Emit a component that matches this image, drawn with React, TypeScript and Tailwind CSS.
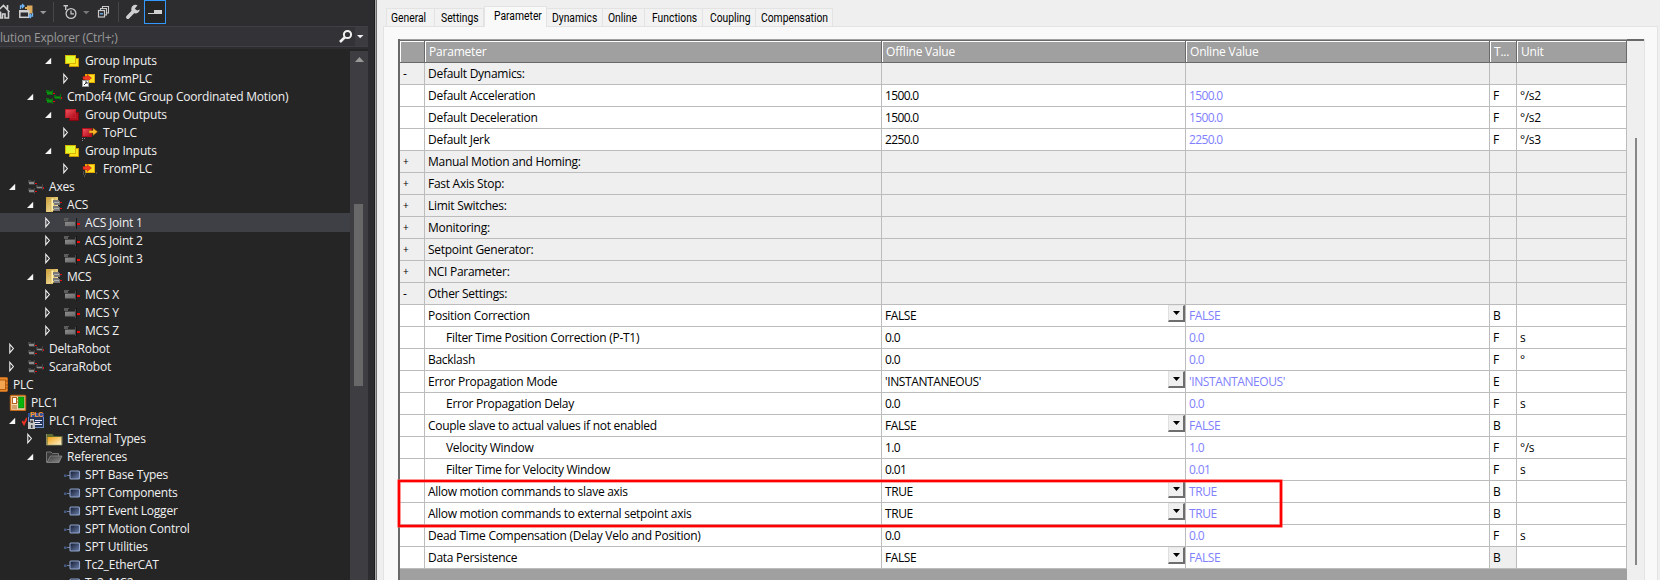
import React from 'react';

type IconName =
  | 'inputs' | 'outputs' | 'fromLinked' | 'from' | 'to' | 'group' | 'axes' | 'axisFolder' | 'axis'
  | 'plc' | 'plcInstance' | 'project' | 'folder' | 'openFolder' | 'library';

type Toggle = 'open' | 'closed' | 'openChecked' | 'none';

interface Node {
  pad: string;
  toggle: Toggle;
  icon: IconName;
  label: string;
  selected?: boolean;
}

const L0 = 'pl-[9px]';
const L1 = 'pl-[27px]';
const L2 = 'pl-[45px]';
const L3 = 'pl-[63px]';

const NODES: Node[] = [
  { pad: L2, toggle: 'open', icon: 'inputs', label: 'Group Inputs' },
  { pad: L3, toggle: 'closed', icon: 'fromLinked', label: 'FromPLC' },
  { pad: L1, toggle: 'open', icon: 'group', label: 'CmDof4 (MC Group Coordinated Motion)' },
  { pad: L2, toggle: 'open', icon: 'outputs', label: 'Group Outputs' },
  { pad: L3, toggle: 'closed', icon: 'to', label: 'ToPLC' },
  { pad: L2, toggle: 'open', icon: 'inputs', label: 'Group Inputs' },
  { pad: L3, toggle: 'closed', icon: 'from', label: 'FromPLC' },
  { pad: L0, toggle: 'open', icon: 'axes', label: 'Axes' },
  { pad: L1, toggle: 'open', icon: 'axisFolder', label: 'ACS' },
  { pad: L2, toggle: 'closed', icon: 'axis', label: 'ACS Joint 1', selected: true },
  { pad: L2, toggle: 'closed', icon: 'axis', label: 'ACS Joint 2' },
  { pad: L2, toggle: 'closed', icon: 'axis', label: 'ACS Joint 3' },
  { pad: L1, toggle: 'open', icon: 'axisFolder', label: 'MCS' },
  { pad: L2, toggle: 'closed', icon: 'axis', label: 'MCS X' },
  { pad: L2, toggle: 'closed', icon: 'axis', label: 'MCS Y' },
  { pad: L2, toggle: 'closed', icon: 'axis', label: 'MCS Z' },
  { pad: L0, toggle: 'closed', icon: 'axes', label: 'DeltaRobot' },
  { pad: L0, toggle: 'closed', icon: 'axes', label: 'ScaraRobot' },
  { pad: '-ml-[9px]', toggle: 'none', icon: 'plc', label: 'PLC' },
  { pad: L0, toggle: 'none', icon: 'plcInstance', label: 'PLC1' },
  { pad: L0, toggle: 'openChecked', icon: 'project', label: 'PLC1 Project' },
  { pad: L1, toggle: 'closed', icon: 'folder', label: 'External Types' },
  { pad: L1, toggle: 'open', icon: 'openFolder', label: 'References' },
  { pad: L3, toggle: 'none', icon: 'library', label: 'SPT Base Types' },
  { pad: L3, toggle: 'none', icon: 'library', label: 'SPT Components' },
  { pad: L3, toggle: 'none', icon: 'library', label: 'SPT Event Logger' },
  { pad: L3, toggle: 'none', icon: 'library', label: 'SPT Motion Control' },
  { pad: L3, toggle: 'none', icon: 'library', label: 'SPT Utilities' },
  { pad: L3, toggle: 'none', icon: 'library', label: 'Tc2_EtherCAT' },
  { pad: L3, toggle: 'none', icon: 'library', label: 'Tc2_MC2' },
];

function Motors({ body, dark }: { body: string; dark: string }) {
  return (
    <g shapeRendering="crispEdges">
      <path d="M1 3h3v1h3v4H2V6H1z" fill={dark} />
      <path d="M2 5h5v2H2z" fill={body} />
      <path d="M1 11h3v1h3v4H2v-2H1z" fill={dark} />
      <path d="M2 13h5v2H2z" fill={body} />
      <path d="M9 8h2v1h4V7h1v6h-1v-1H10v-1H9z" fill={dark} />
      <path d="M10 10h5v1h-5z" fill={body} />
      <path d="M7 3h1v5H7zM7 11h1v6H7z" fill={dark} />
      <path d="M8 6h2v1H8zM8 14h2v1H8zM16 10h1v2h-1z" fill="#e01010" />
    </g>
  );
}

function TreeIcon({ name }: { name: IconName }) {
  let art: React.ReactNode = null;
  switch (name) {
    case 'inputs':
      art = (
        <>
          <rect x="6.5" y="7.5" width="9" height="8" fill="#ffe21a" stroke="#c79500" />
          <rect x="2.5" y="4.5" width="10" height="8" fill="url(#lime)" stroke="#d8b400" />
        </>
      );
      break;
    case 'outputs':
      art = (
        <>
          <rect x="6.5" y="7.5" width="9" height="8" fill="#b5101f" stroke="#7d0812" />
          <rect x="2.5" y="4.5" width="10" height="8" fill="url(#crimson)" stroke="#c0202c" />
        </>
      );
      break;
    case 'from':
    case 'fromLinked':
      art = (
        <>
          <rect x="4.5" y="5.5" width="9" height="8" fill="#ffdf20" stroke="#e0a800" />
          <path d="M2 7.5h4V5.5l4.500 3.500L6 12.500V10.500H2z" fill="#f03a24" stroke="#b51a10" strokeWidth=".5" />
          {name === 'fromLinked' ? (
            <>
              <rect x="1.500" y="11.500" width="6" height="6" fill="#fff" stroke="#999" />
              <path d="M3 16l3-3M4 13h2v2" stroke="#333" fill="none" />
            </>
          ) : (
            <path d="M2 13h3M2 15h3M3 17h2M15 14h1" stroke="#777" strokeDasharray="1 1" fill="none" />
          )}
        </>
      );
      break;
    case 'to':
      art = (
        <>
          <rect x="1.500" y="5.500" width="9" height="8" fill="url(#crimson)" stroke="#b0101c" />
          <path d="M8 7.500h4V5l4.500 3.800-4.500 3.700v-2.500H8z" fill="#ffb52a" stroke="#9c5a00" strokeWidth=".5" />
          <path d="M1 15.500h4M1 17.500h2" stroke="#888" strokeDasharray="1 1" fill="none" />
        </>
      );
      break;
    case 'group':
      art = <Motors body="#129012" dark="#0b6e0f" />;
      break;
    case 'axes':
      art = <Motors body="#8c8c8c" dark="#444444" />;
      break;
    case 'axisFolder':
      art = (
        <>
          <path d="M1 2h12v13H8v2H1z" fill="url(#paper)" />
          <path d="M6 3h3v12l-3 2z" fill="#fff0b0" stroke="#c9a13a" strokeWidth=".6" />
          <g shapeRendering="crispEdges">
            <path d="M8 5h6v1h1v4H9V8H8zM8 11h6v1h1v4H9v-2H8z" fill="#777" />
            <path d="M9 7h5v1H9zM9 13h5v1H9z" fill="#b0b0b0" />
            <path d="M15 7h2v1h-2zM15 13h2v1h-2z" fill="#e01010" />
          </g>
        </>
      );
      break;
    case 'axis':
      art = (
        <g shapeRendering="crispEdges">
          <path d="M1 5h5v1H5v2H1z" fill="#5c5c5c" />
          <rect x="2" y="8" width="10" height="6" fill="#4a4a4a" />
          <rect x="2" y="9" width="10" height="4" fill="url(#steel)" />
          <rect x="12" y="6" width="1" height="9" fill="#4a4a4a" />
          <rect x="13" y="5" width="1" height="11" fill="#161616" />
          <rect x="14" y="10" width="3" height="2" fill="#fb0505" />
        </g>
      );
      break;
    case 'plc':
      art = (
        <>
          <rect x="1.500" y="2.500" width="15" height="14" rx="1" fill="#e8892e" stroke="#c2691a" />
          <rect x="7.500" y="5" width="7" height="9.500" fill="#f3a552" stroke="#b65a0c" />
          <path d="M15 6h2M15 10h2M15 13h2" stroke="#9c4c06" />
        </>
      );
      break;
    case 'plcInstance':
      art = (
        <>
          <rect x="1.500" y="2.500" width="15" height="15" rx="1" fill="#f9dcb4" stroke="#c2691a" strokeWidth="1.400" />
          <rect x="3.500" y="4.500" width="4" height="6" fill="#fff" stroke="#b4641e" />
          <rect x="9.500" y="4" width="5.500" height="11" fill="#07b40b" stroke="#0a7b10" strokeWidth=".6" />
          <path d="M3 13h5M3 15h5M8 6h1.500M8 9h1.500" stroke="#b4641e" />
        </>
      );
      break;
    case 'project':
      art = (
        <>
          <rect x="1.500" y="2.500" width="15" height="14" fill="#24365c" stroke="#6f8fc6" />
          <path d="M1 2h16v4H1z" fill="#2c50a0" />
          <text x="3" y="6" fontSize="7" fontWeight="700" fill="#ff9a1f" fontFamily="Liberation Sans, sans-serif" textLength="13">PLC</text>
          <path d="M8 9.500h7M8 11.500h5M8 13.500h7" stroke="#eef" />
          <path d="M1 11h2V8h4v3h1v7H1z" fill="#c4c4c4" />
          <path d="M3.500 9.500h2.500V12H3.500zM4 14h1.500v3H4z" fill="#444" />
        </>
      );
      break;
    case 'folder':
      art = (
        <>
          <path d="M1.500 5h6l1.500 2h7.500v9h-15z" fill="#5d6c30" />
          <path d="M2.500 8h14v8h-14z" fill="url(#amber)" />
          <path d="M1.500 5v11h15.500V7" fill="none" stroke="#a8a878" strokeWidth=".7" />
        </>
      );
      break;
    case 'openFolder':
      art = (
        <>
          <path d="M1.500 15.500V5h4.500l1.500 1.500h6V9" fill="#3a3a3a" stroke="#7d7d7d" strokeWidth=".9" />
          <path d="M2 15.500L5.500 9h11.500l-3 6.500z" fill="url(#ash)" stroke="#8d8d8d" strokeWidth=".8" />
        </>
      );
      break;
    case 'library':
      art = (
        <>
          <rect x="1" y="9.500" width="2.500" height="2.500" fill="#45587f" />
          <path d="M4 10.500h3" stroke="#6d80a8" />
          <rect x="7" y="6" width="9.500" height="8" rx="1" fill="url(#navy)" stroke="#8fa3cb" strokeWidth="1.100" />
        </>
      );
      break;
  }
  return <svg className="h-[18px] w-[18px] shrink-0" viewBox="0 0 18 18">{art}</svg>;
}

function ToggleGlyph({ kind }: { kind: Toggle }) {
  return (
    <svg className="h-[18px] w-[18px] shrink-0" viewBox="0 0 18 18">
      {kind === 'closed' ? (
        <path d="M.8 5.300L4.400 9.500.8 13.700z" fill="none" stroke="#f1f1f1" strokeWidth="1.100" />
      ) : (
        <path d="M6.200 6.800V13H0z" fill="#f5f5f5" />
      )}
      {kind === 'openChecked' && <path d="M13.300 10l1.700 3 3-6" fill="none" stroke="#ee3322" strokeWidth="1.800" />}
    </svg>
  );
}

function Gradients() {
  const defs: [string, string, string][] = [
    ['lime', '#c8ff30', '#fff02a'],
    ['crimson', '#f05560', '#b00818'],
    ['paper', '#c99c38', '#fff3b8'],
    ['steel', '#8c8c8c', '#6a6a6a'],
    ['amber', '#f0a010', '#fff4d0'],
    ['ash', '#3a3a3a', '#8a8a8a'],
    ['navy', '#11182e', '#6d80aa'],
  ];
  return (
    <svg className="absolute h-0 w-0">
      <defs>
        {defs.map(([id, a, b]) => (
          <linearGradient key={id} id={id} x1="0" y1="0" x2="1" y2="1">
            <stop offset="0" stopColor={a} />
            <stop offset="1" stopColor={b} />
          </linearGradient>
        ))}
      </defs>
    </svg>
  );
}

function Toolbar() {
  return (
    <svg className="h-[26px] w-[368px] shrink-0" viewBox="0 0 368 26">
      {/* home */}
      <path d="M-4 12.500L3.500 5.500l6 6.500M7.500 5v4M.5 11.500V18h2v-4h2.500v4H8.500v-6.500" fill="none" stroke="#d0d0d0" strokeWidth="1.600" />
      {/* switch views */}
      <path d="M27 5.500h5.500v8H27z" fill="#dcab5e" />
      <path d="M25 7h3v2h-3z" fill="#dcab5e" />
      <rect x="19.800" y="10.800" width="9" height="6.500" fill="#2d2d30" stroke="#d0d0d0" strokeWidth="1.500" />
      <path d="M19 11.500h10" stroke="#d0d0d0" strokeWidth="2" />
      <path d="M20.500 9V6h3M22 4l2 2-2 2" fill="none" stroke="#6fb4f5" strokeWidth="1.300" />
      <path d="M32.500 13v3H29M31 14l-2 2 2 2" fill="none" stroke="#6fb4f5" strokeWidth="1.300" />
      <path d="M40 11h6.500L43.200 14.300z" fill="#999" />
      <path d="M53.500 2v20" stroke="#46464a" />
      {/* pending changes */}
      <path d="M63.500 5.800h4.500M65.700 6v4" stroke="#c8c8c8" fill="none" strokeWidth="1.400" />
      <circle cx="71" cy="13.500" r="4.900" fill="none" stroke="#c8c8c8" strokeWidth="1.300" />
      <path d="M71 10.500v3.300h3" fill="none" stroke="#c8c8c8" strokeWidth="1.200" />
      <path d="M83 11h6.500L86.200 14.300z" fill="#777" />
      {/* collapse all */}
      <path d="M102.500 8V6.500h6V13H107M100.500 10V8.500h6V15H105" fill="none" stroke="#c8c8c8" strokeWidth="1.100" />
      <rect x="98.500" y="10.500" width="6" height="6.500" fill="#2d2d30" stroke="#c8c8c8" strokeWidth="1.200" />
      <path d="M100 13.800h3" stroke="#6fb4f5" strokeWidth="1.300" />
      <path d="M118.500 2v20" stroke="#46464a" />
      {/* wrench */}
      <path d="M127.800 17.200l6-6.200" stroke="#d0d0d0" strokeWidth="3.600" strokeLinecap="round" />
      <path d="M137.500 5.300a4.300 4.300 0 1 0 2.300 4.200l-2.600 1.100-2.400-1.900z" fill="#d0d0d0" />
      <rect x="144.500" y=".5" width="21" height="23" fill="#252526" stroke="#3399ff" />
      <path d="M148 13.500h7" stroke="#d0d0d0" />
      <rect x="154" y="10" width="8" height="4" fill="#d0d0d0" />
    </svg>
  );
}

function SolutionExplorer() {
  return (
    <div className="flex h-full w-[368px] shrink-0 flex-col bg-[#252526]">
      <div className="h-[26px] bg-[#2d2d30]"><Toolbar /></div>
      <div className="flex h-[21px] shrink-0 items-center justify-between border-y border-[#3f3f46] bg-[#333337]">
        <span className="relative top-px whitespace-pre text-[12px] leading-[18px] tracking-[-0.2px] text-[#999999]">lution Explorer (Ctrl+;)</span>
        <svg className="h-[19px] w-[30px]" viewBox="0 0 30 19">
          <path d="M17 0h13v19H17z" fill="#3b3b40" />
          <circle cx="9.500" cy="7.500" r="3.600" fill="none" stroke="#f1f1f1" strokeWidth="2" />
          <path d="M6.700 10.300L2 15" stroke="#f1f1f1" strokeWidth="2.600" />
          <path d="M19 8h6.500L22.200 11.300z" fill="#f1f1f1" />
        </svg>
      </div>
      <div className="h-[2px] shrink-0 bg-[#2d2d30]" />
      <div className="flex min-h-0 flex-1 overflow-hidden pt-[2px]">
        <div className="w-[350px] shrink-0">
          {NODES.map((n, i) => (
            <div key={i} className={n.selected ? 'flex h-[18px] items-center bg-[#3f3f46] shadow-[0_1px_0_#3f3f46]' : 'flex h-[18px] items-center'}>
              <div className={`flex items-center ${n.pad}`}>
                {n.toggle !== 'none' && <ToggleGlyph kind={n.toggle} />}
                <TreeIcon name={n.icon} />
                <span className="relative top-px whitespace-nowrap pl-[4px] text-[12px] leading-[18px] tracking-[-0.2px] text-[#f1f1f1]">{n.label}</span>
              </div>
            </div>
          ))}
        </div>
        <div className="flex w-[18px] shrink-0 flex-col items-center bg-[#3e3e42]">
          <svg className="mt-[6px] h-[5px] w-[9px]" viewBox="0 0 9 5"><path d="M0 5L4.500 0 9 5z" fill="#999" /></svg>
          <div className="mr-px mt-[142px] h-[182px] w-[9px] bg-[#686868]" />
        </div>
      </div>
    </div>
  );
}

const TABS: [string, string][] = [
  ['General', 'w-[49px] pl-[4px]'],
  ['Settings', 'w-[49px] pl-[6px]'],
  ['Parameter', 'w-[63px] pl-[9px]'],
  ['Dynamics', 'w-[56px] pl-[5px]'],
  ['Online', 'w-[42px] pl-[5px]'],
  ['Functions', 'w-[58px] pl-[7px]'],
  ['Coupling', 'w-[53px] pl-[7px]'],
  ['Compensation', 'w-[77px] pl-[5px]'],
];

function TabStrip() {
  return (
    <div className="flex h-[26px] items-end pl-[8px]">
      {TABS.map(([label, box]) => {
        const active = label === 'Parameter';
        return (
          <div
            key={label}
            className={`shrink-0 border-[#e3e3e3] ${box} ${
              active ? 'relative -mb-px h-[21px] border-x border-t bg-[#f9f9f9]' : 'h-[18px] border-r border-t bg-[#f2f2f2] first:border-l'
            }`}
          >
            <span className="inline-block origin-left scale-x-[0.86] whitespace-nowrap align-top font-[Roboto] text-[12px] leading-[18px] text-black">{label}</span>
          </div>
        );
      })}
    </div>
  );
}

interface Row {
  mark?: string;
  name: string;
  indent?: boolean;
  value?: string;
  type?: string;
  unit?: string;
  select?: boolean;
}

const ROWS: Row[] = [
  { mark: '-', name: 'Default Dynamics:' },
  { name: 'Default Acceleration', value: '1500.0', type: 'F', unit: '°/s2' },
  { name: 'Default Deceleration', value: '1500.0', type: 'F', unit: '°/s2' },
  { name: 'Default Jerk', value: '2250.0', type: 'F', unit: '°/s3' },
  { mark: '+', name: 'Manual Motion and Homing:' },
  { mark: '+', name: 'Fast Axis Stop:' },
  { mark: '+', name: 'Limit Switches:' },
  { mark: '+', name: 'Monitoring:' },
  { mark: '+', name: 'Setpoint Generator:' },
  { mark: '+', name: 'NCI Parameter:' },
  { mark: '-', name: 'Other Settings:' },
  { name: 'Position Correction', value: 'FALSE', type: 'B', select: true },
  { name: 'Filter Time Position Correction (P-T1)', indent: true, value: '0.0', type: 'F', unit: 's' },
  { name: 'Backlash', value: '0.0', type: 'F', unit: '°' },
  { name: 'Error Propagation Mode', value: "'INSTANTANEOUS'", type: 'E', select: true },
  { name: 'Error Propagation Delay', indent: true, value: '0.0', type: 'F', unit: 's' },
  { name: 'Couple slave to actual values if not enabled', value: 'FALSE', type: 'B', select: true },
  { name: 'Velocity Window', indent: true, value: '1.0', type: 'F', unit: '°/s' },
  { name: 'Filter Time for Velocity Window', indent: true, value: '0.01', type: 'F', unit: 's' },
  { name: 'Allow motion commands to slave axis', value: 'TRUE', type: 'B', select: true },
  { name: 'Allow motion commands to external setpoint axis', value: 'TRUE', type: 'B', select: true },
  { name: 'Dead Time Compensation (Delay Velo and Position)', value: '0.0', type: 'F', unit: 's' },
  { name: 'Data Persistence', value: 'FALSE', type: 'B', select: true },
];

const COLS = 'grid grid-cols-[25px_457px_304px_304px_27px_110px]';
const CELL = 'flex h-[22px] items-center whitespace-nowrap border-b border-r border-[#bcbcbc] pl-[3px]';

function DropButton() {
  return (
    <span className="flex h-[17px] w-[17px] items-center justify-center self-start border border-b-2 border-r-2 border-b-[#6e6e6e] border-l-[#e0e0e0] border-r-[#6e6e6e] border-t-[#e8e8e8] bg-[#f0f0f0]">
      <svg className="h-[4px] w-[7px]" viewBox="0 0 7 4"><path d="M0 0h7L3.500 4z" fill="#000" /></svg>
    </span>
  );
}

function ParameterTable() {
  return (
    <div className="relative flex h-full flex-1 border-l-2 border-l-[#696969] border-r border-r-[#e3e3e3] bg-[#efefef]">
      <div className="flex w-[1227px] shrink-0 flex-col bg-[#a0a0a0]">
        <div className="h-px shrink-0 bg-[#a0a0a0]" />
        <div className="h-px shrink-0 bg-[#696969]" />
        <div className={`${COLS} shrink-0 text-[12px] tracking-[-0.2px] text-white`}>
          {['', 'Parameter', 'Offline Value', 'Online Value', 'T...', 'Unit'].map((h, i) => (
            <div key={i} className="h-[22px] border-b border-r border-[#696969]">
              <div className="h-[21px] whitespace-nowrap border-l border-t border-white pl-[3px] leading-[20px]">{h}</div>
            </div>
          ))}
        </div>
        {ROWS.map((r, i) => {
          const caps = r.value && /[A-Z]/.test(r.value);
          const track = caps ? 'tracking-[-0.4px]' : 'tracking-[-0.65px]';
          const last = i === ROWS.length - 1;
          return (
            <div key={i} className={`${COLS} shrink-0 text-[12px] text-black ${r.mark ? 'bg-[#efefef]' : 'bg-white'}`}>
              <div className={`${CELL} ${r.mark === '+' ? 'text-[10px]' : ''}`}>{r.mark}</div>
              <div className={`${CELL} tracking-[-0.28px]`}>
                <span className={r.indent ? 'pl-[18px]' : ''}>{r.name}</span>
              </div>
              <div className={`${CELL} justify-between`}>
                <span className={track}>{r.value}</span>
                {r.select && <DropButton />}
              </div>
              <div className={`${CELL} ${track} text-[#8080ff]`}>{r.value}</div>
              <div className={`${CELL} ${last ? 'bg-[#efefef]' : ''}`}>{r.type}</div>
              <div className={`${CELL} tracking-[-0.35px]`}>{r.unit}</div>
            </div>
          );
        })}
      </div>
      <div className="flex flex-1 flex-col items-center border-t-2 border-t-[#696969]">
        <div className="mt-[97px] h-[427px] w-[2px] bg-[#868686]" />
      </div>
      <div className="absolute -left-[2px] top-[441px] h-[47px] w-[884px] border-2 border-[#ff0000] shadow-[0_0_0_0.6px_#ff5050,inset_0_0_0_0.6px_#ff5050]" />
    </div>
  );
}

export default function App() {
  return (
    <div className="flex h-[580px] w-[1660px] overflow-hidden bg-[#efefef] font-['Open_Sans',sans-serif]">
      <Gradients />
      <SolutionExplorer />
      <div className="w-[6px] shrink-0 bg-[#2d2d30]" />
      <div className="w-px shrink-0 bg-[#1e1e1e]" />
      <div className="w-px shrink-0 bg-[#a8a8a8]" />
      <div className="w-px shrink-0 bg-[#6e6e6e]" />
      <div className="flex min-w-0 flex-1 flex-col pl-[1px] pr-[2px]">
        <TabStrip />
        <div className="ml-[5px] flex min-h-0 flex-1 border-x border-t border-[#e3e3e3] bg-[#f9f9f9] pl-[14px] pr-[12px] pt-[12px]">
          <ParameterTable />
        </div>
      </div>
    </div>
  );
}
